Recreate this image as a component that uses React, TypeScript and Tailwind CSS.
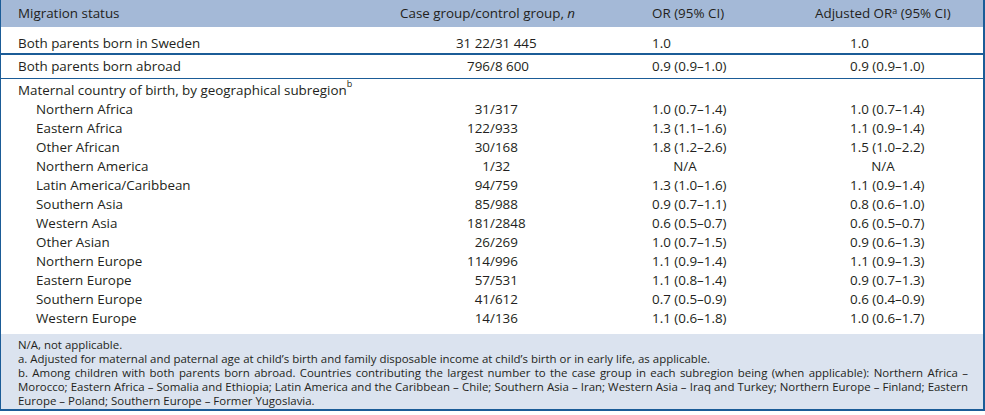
import React from "react";

type Row = { name: string; a: string; b: string; or: string; adj: string };

const rows: Row[] = [
  { name: "Northern Africa", a: "31", b: "317", or: "1.0 (0.7–1.4)", adj: "1.0 (0.7–1.4)" },
  { name: "Eastern Africa", a: "122", b: "933", or: "1.3 (1.1–1.6)", adj: "1.1 (0.9–1.4)" },
  { name: "Other African", a: "30", b: "168", or: "1.8 (1.2–2.6)", adj: "1.5 (1.0–2.2)" },
  { name: "Northern America", a: "1", b: "32", or: "N/A", adj: "N/A" },
  { name: "Latin America/Caribbean", a: "94", b: "759", or: "1.3 (1.0–1.6)", adj: "1.1 (0.9–1.4)" },
  { name: "Southern Asia", a: "85", b: "988", or: "0.9 (0.7–1.1)", adj: "0.8 (0.6–1.0)" },
  { name: "Western Asia", a: "181", b: "2848", or: "0.6 (0.5–0.7)", adj: "0.6 (0.5–0.7)" },
  { name: "Other Asian", a: "26", b: "269", or: "1.0 (0.7–1.5)", adj: "0.9 (0.6–1.3)" },
  { name: "Northern Europe", a: "114", b: "996", or: "1.1 (0.9–1.4)", adj: "1.1 (0.9–1.3)" },
  { name: "Eastern Europe", a: "57", b: "531", or: "1.1 (0.8–1.4)", adj: "0.9 (0.7–1.3)" },
  { name: "Southern Europe", a: "41", b: "612", or: "0.7 (0.5–0.9)", adj: "0.6 (0.4–0.9)" },
  { name: "Western Europe", a: "14", b: "136", or: "1.1 (0.6–1.8)", adj: "1.0 (0.6–1.7)" },
];

function Val({ v }: { v: string }) {
  if (v === "N/A") {
    return <span className="inline-block w-[66px] text-center">N/A</span>;
  }
  return <span>{v}</span>;
}

function DataRow({
  name,
  a,
  b,
  or,
  adj,
  indent,
  className,
}: Row & { indent?: boolean; className?: string }) {
  return (
    <div className={"flex items-center " + (className ?? "")}>
      <div className={"w-[382px] shrink-0 " + (indent ? "pl-[18px]" : "")}>{name}</div>
      <div className="w-[90px] shrink-0 text-right">{a}</div>
      <div className="w-[162px] shrink-0">/{b}</div>
      <div className="w-[198px] shrink-0">
        <Val v={or} />
      </div>
      <div className="flex-1">
        <Val v={adj} />
      </div>
    </div>
  );
}

export default function App() {
  return (
    <div
      className="w-[985px] bg-white text-[#231f20] text-[13.4px] border-l border-r-2 border-b-2 border-[#1b5c97]"
      style={{ fontFamily: '"Open Sans", "Liberation Sans", sans-serif' }}
    >
      {/* Header */}
      <div className="flex items-center h-[27px] bg-[#a4b9d7] pl-[17px]">
        <div className="w-[382px] shrink-0">Migration status</div>
        <div className="w-[252px] shrink-0">
          Case group/control group, <i>n</i>
        </div>
        <div className="w-[163px] shrink-0">OR (95% CI)</div>
        <div className="flex-1">
          Adjusted OR<sup className="text-[9px]">a</sup> (95% CI)
        </div>
      </div>

      <DataRow
        name="Both parents born in Sweden"
        a="31 22"
        b="31 445"
        or="1.0"
        adj="1.0"
        className="h-[28px] pt-[6px] pl-[17px] border-b-2 border-[#1b5c97]"
      />
      <DataRow
        name="Both parents born abroad"
        a="796"
        b="8 600"
        or="0.9 (0.9–1.0)"
        adj="0.9 (0.9–1.0)"
        className="h-[24px] pl-[17px] border-b border-[#1b5c97]"
      />

      <div className="pt-[1px] pb-[6px] pl-[17px]">
        <div className="h-[20px] flex items-center">
          Maternal country of birth, by geographical subregion
          <sup className="text-[9px] -translate-y-[2px]">b</sup>
        </div>
        {rows.map((r) => (
          <DataRow key={r.name} {...r} indent className="h-[19px]" />
        ))}
      </div>

      {/* Footer */}
      <div className="bg-[#dbe3ef] pl-[17px] pr-[15px] pt-[4px] pb-[1px] text-[11.45px] leading-[14px]">
        <div className="whitespace-nowrap">N/A, not applicable.</div>
        <div className="whitespace-nowrap">
          a. Adjusted for maternal and paternal age at child’s birth and family disposable income at child’s birth or in early life, as applicable.
        </div>
        <div className="text-justify [text-align-last:justify] [word-spacing:-1px]">
          b. Among children with both parents born abroad. Countries contributing the largest number to the case group in each subregion being (when applicable): Northern Africa –
        </div>
        <div className="text-justify [text-align-last:justify] [word-spacing:-1px]">
          Morocco; Eastern Africa – Somalia and Ethiopia; Latin America and the Caribbean – Chile; Southern Asia – Iran; Western Asia – Iraq and Turkey; Northern Europe – Finland; Eastern
        </div>
        <div className="whitespace-nowrap">Europe – Poland; Southern Europe – Former Yugoslavia.</div>
      </div>
    </div>
  );
}
